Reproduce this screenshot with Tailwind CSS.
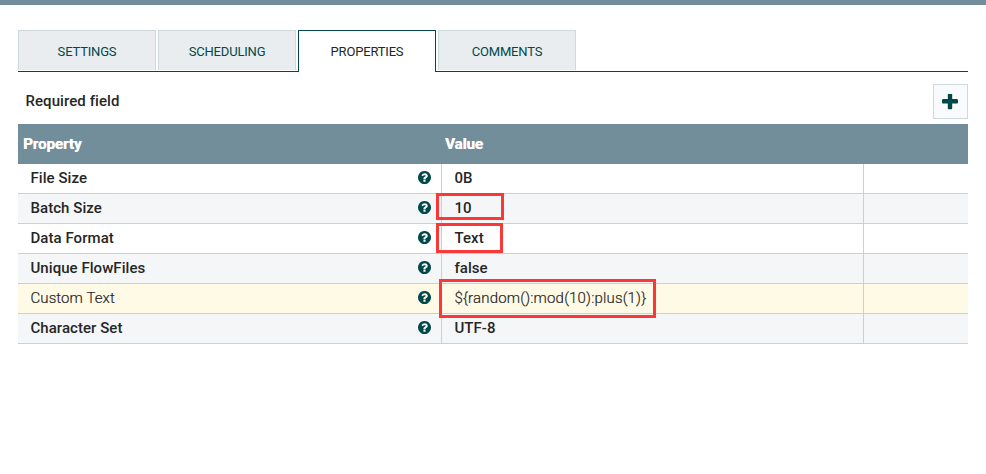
<!DOCTYPE html>
<html lang="en">
<head>
<meta charset="utf-8">
<title>Configure Processor</title>
<script src="https://cdn.jsdelivr.net/npm/@tailwindcss/browser@4"></script>
</head>
<body class="bg-white font-[Roboto,sans-serif] text-[#262626]">
<svg class="hidden">
  <symbol id="help" viewBox="128 128 1536 1536"><path d="M1024 1376v-192q0-14-9-23t-23-9h-192q-14 0-23 9t-9 23v192q0 14 9 23t23 9h192q14 0 23-9t9-23zm256-672q0-88-55.5-163t-138.5-116-170-41q-243 0-371 213-15 24 8 42l132 100q7 6 19 6 16 0 25-12 53-68 86-92 34-24 86-24 48 0 85.5 26t37.5 59q0 38-20 61t-68 45q-63 28-115.5 86.5t-52.5 125.5v36q0 14 9 23t23 9h192q14 0 23-9t9-23q0-19 21.5-49.5t54.5-49.5q32-18 49-28.5t46-35 44.5-48 28-60.5 12.5-81zm384 192q0 209-103 385.5t-279.5 279.5-385.5 103-385.5-103-279.5-279.5-103-385.5 103-385.5 279.5-279.5 385.5-103 385.5 103 279.5 279.5 103 385.5z"/></symbol>
</svg>
<div class="relative h-[474px] w-[986px] overflow-hidden border-t-[5px] border-[#728e9b]">
  <main class="mt-[25px] ml-[18px] w-[950px]">
    <nav class="flex h-[42px] gap-[2px] border-b border-[#004849] text-[13px] tracking-[-0.18px] text-[#004849]">
      <div class="flex h-10 w-[138px] items-center justify-center border border-b-0 border-[#ccdadb] bg-[#e9edf0] pt-[3px]">SETTINGS</div>
      <div class="flex h-10 w-[138px] items-center justify-center border border-b-0 border-[#ccdadb] bg-[#e9edf0] pt-[3px]">SCHEDULING</div>
      <div class="flex h-[42px] w-[138px] items-center justify-center border border-b-0 border-[#004849] bg-white pt-px text-[#262626]">PROPERTIES</div>
      <div class="flex h-10 w-[138px] items-center justify-center border border-b-0 border-[#ccdadb] bg-[#e9edf0] pt-[3px]">COMMENTS</div>
    </nav>
    <div class="mt-3 mb-[5px] flex h-[35px] items-center justify-between pl-[7.5px]">
      <span class="text-[15px] font-medium tracking-[0.07px]">Required field</span>
      <button class="flex size-[35px] items-center justify-center border border-[#ccdadb] bg-[#f9fafb] pr-px">
        <svg class="size-4" viewBox="192 192 1408 1408" fill="#004849"><path d="M1600 736v192q0 40-28 68t-68 28h-416v416q0 40-28 68t-68 28h-192q-40 0-68-28t-28-68v-416h-416q-40 0-68-28t-28-68v-192q0-40 28-68t68-28h416v-416q0-40 28-68t68-28h192q40 0 68 28t28 68v416h416q40 0 68 28t28 68z"/></svg>
      </button>
    </div>
    <div class="grid h-10 grid-cols-[422px_1fr] items-center bg-[#728e9b] pl-[5px] text-[15px] font-bold text-white [text-shadow:0.4px_0_0_white]">
      <span>Property</span><span>Value</span>
    </div>
    <div class="text-[15px] font-medium tracking-[0.05px] [&>div]:grid [&>div]:h-[30px] [&>div]:grid-cols-[424px_422px_104px] [&>div]:border-b [&>div]:border-[#c7d2d7] [&>div>div]:flex [&>div>div]:items-center [&>div>div]:border-r [&>div>div]:border-[#c7d2d7] [&>div>div]:pb-px [&>div>div]:pl-[12.5px] [&>div>div:last-child]:border-r-0 [&_svg]:mr-[10px] [&_svg]:mb-px [&_svg]:ml-auto [&_svg]:size-[13px] [&_svg]:fill-[#004849]">
      <div><div>File Size<svg><use href="#help"/></svg></div><div>0B</div><div></div></div>
      <div class="bg-[#f4f6f7]"><div>Batch Size<svg><use href="#help"/></svg></div><div>10</div><div></div></div>
      <div><div>Data Format<svg><use href="#help"/></svg></div><div>Text</div><div></div></div>
      <div class="bg-[#f4f6f7]"><div>Unique FlowFiles<svg><use href="#help"/></svg></div><div>false</div><div></div></div>
      <div class="bg-[#fffae6] font-light tracking-[0.08px] [-webkit-text-stroke:0.2px_#262626]"><div>Custom Text<svg><use href="#help"/></svg></div><div class="tracking-[0.17px]">${random():mod(10):plus(1)}</div><div></div></div>
      <div class="bg-[#f4f6f7]"><div>Character Set<svg><use href="#help"/></svg></div><div>UTF-8</div><div></div></div>
    </div>
  </main>
  <div class="absolute top-[188px] left-[436px] h-[27px] w-[68px] border-[3px] border-[#fb3838]"></div>
  <div class="absolute top-[218px] left-[436px] h-[30px] w-[67px] border-[3px] border-[#fb3838]"></div>
  <div class="absolute top-[274px] left-[439px] h-[39px] w-[217px] border-[3px] border-[#fb3838]"></div>
</div>
</body>
</html>
